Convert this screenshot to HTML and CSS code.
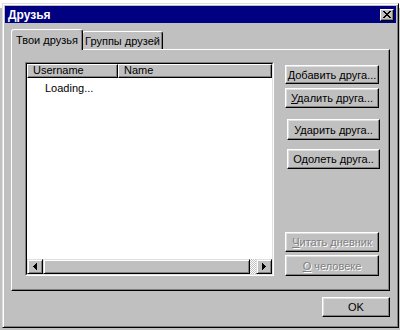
FILE: index.html
```html
<!DOCTYPE html>
<html lang="ru">
<head>
    <meta charset="UTF-8">
    <title>Друзья</title>
    <link rel="stylesheet" href="styles.css">
</head>
<body>
    <div class="backdrop"></div>

    <div class="window">
        <div class="titlebar">
            <span class="title">Друзья</span>
            <button class="close-btn" title="Close">
                <svg width="8" height="7" viewBox="0 0 8 7" shape-rendering="crispEdges">
                    <path d="M0 0h2v1H0zM6 0h2v1H6zM1 1h2v1H1zM5 1h2v1H5zM2 2h4v1H2zM3 3h2v1H3zM2 4h4v1H2zM1 5h2v1H1zM5 5h2v1H5zM0 6h2v1H0zM6 6h2v1H6z" fill="#000"/>
                </svg>
            </button>
        </div>

        <div class="window-body">
            <div class="tabs">
                <div class="tab active">Твои друзья</div>
                <div class="tab">Группы друзей</div>
            </div>

            <div class="panel">
                <div class="listview">
                    <div class="list-inner">
                        <div class="list-header">
                            <div class="col col-user">Username</div>
                            <div class="col col-name">Name</div>
                        </div>
                        <div class="list-body">
                            <div class="list-row">Loading...</div>
                        </div>
                        <div class="hscroll">
                            <div class="scroll-btn">
                                <svg width="4" height="7" viewBox="0 0 4 7" shape-rendering="crispEdges">
                                    <path d="M3 0h1v7H3zM2 1h1v5H2zM1 2h1v3H1zM0 3h1v1H0z" fill="#000"/>
                                </svg>
                            </div>
                            <div class="scroll-thumb"></div>
                            <div class="scroll-track"></div>
                            <div class="scroll-btn">
                                <svg width="4" height="7" viewBox="0 0 4 7" shape-rendering="crispEdges">
                                    <path d="M0 0h1v7H0zM1 1h1v5H1zM2 2h1v3H2zM3 3h1v1H3z" fill="#000"/>
                                </svg>
                            </div>
                        </div>
                    </div>
                </div>

                <div class="actions">
                    <button class="btn btn-add"><u>Д</u>обавить друга...</button>
                    <button class="btn btn-remove"><u>У</u>далить друга...</button>
                    <button class="btn btn-hit">Ударить друга..</button>
                    <button class="btn btn-beat">Одолеть друга..</button>
                    <button class="btn btn-diary" disabled><u>Ч</u>итать дневник</button>
                    <button class="btn btn-about" disabled><u>О</u> человеке</button>
                </div>
            </div>

            <div class="footer">
                <button class="btn btn-ok">OK</button>
            </div>
        </div>
    </div>
</body>
</html>
```

FILE: styles.css
```css
* {
    margin: 0;
    padding: 0;
    box-sizing: border-box;
}

body {
    width: 400px;
    height: 330px;
    overflow: hidden;
    background: #c0c0c0;
    font-family: 'Liberation Sans', Arial, sans-serif;
    font-size: 11px;
    color: #000;
}

/* what peeks out behind the dialog */
.backdrop {
    height: 8px;
    background: #fff;
}

/* dialog window */
.window {
    position: absolute;
    left: 2px;
    top: 3px;
    width: 397px;
    height: 325px;
    background: #c0c0c0;
    border: 1px solid;
    border-color: #dfdfdf #000 #000 #dfdfdf;
    box-shadow: inset 1px 1px #fff, inset -1px -1px #808080;
    padding: 2px;
    display: flex;
    flex-direction: column;
}

.titlebar {
    height: 17px;
    background: #000080;
    display: flex;
    align-items: center;
    justify-content: space-between;
    padding: 0 2px 0 3px;
}

.title {
    color: #fff;
    font-weight: bold;
    font-size: 12px;
}

.close-btn {
    width: 14px;
    height: 12px;
    background: #c0c0c0;
    border: 1px solid;
    border-color: #fff #000 #000 #fff;
    box-shadow: inset -1px -1px #808080;
    display: flex;
    align-items: center;
    justify-content: center;
}

.window-body {
    flex: 1;
    padding: 6px 6px 0 6px;
    display: flex;
    flex-direction: column;
}

/* tabs */
.tabs {
    display: flex;
    align-items: flex-end;
    height: 20px;
}

.tab {
    height: 18px;
    display: flex;
    align-items: center;
    justify-content: center;
    white-space: nowrap;
    background: #c0c0c0;
    border-top: 1px solid #fff;
    border-left: 1px solid #fff;
    border-right: 1px solid #000;
    box-shadow: inset -1px 0 #808080;
    border-radius: 3px 3px 0 0;
}

.tab.active {
    height: 21px;
    width: 72px;
    margin-bottom: -1px;
    position: relative;
    z-index: 1;
}

.tab:not(.active) {
    width: 81px;
    margin-left: -1px;
}

.panel {
    height: 242px;
    border: 1px solid;
    border-color: #fff #000 #000 #fff;
    box-shadow: inset -1px -1px #808080;
    padding: 12px 0 14px 13px;
    display: flex;
    gap: 11px;
}

/* list view */
.listview {
    width: 249px;
    border: 1px solid;
    border-color: #808080 #fff #fff #808080;
}

.list-inner {
    height: 100%;
    border: 1px solid;
    border-color: #000 #dfdfdf #dfdfdf #000;
    background: #fff;
    display: flex;
    flex-direction: column;
}

.list-header {
    display: flex;
    height: 14px;
}

.col {
    background: #c0c0c0;
    border: 1px solid;
    border-color: #fff #000 #000 #fff;
    box-shadow: inset -1px -1px #808080;
    padding-left: 5px;
    line-height: 11px;
}

.col-user { width: 91px; }
.col-name { flex: 1; }

.list-body {
    flex: 1;
}

.list-row {
    padding: 3px 0 0 18px;
    line-height: 14px;
}

.hscroll {
    height: 15px;
    display: flex;
}

.scroll-btn {
    width: 16px;
    background: #c0c0c0;
    border: 1px solid;
    border-color: #dfdfdf #000 #000 #dfdfdf;
    box-shadow: inset 1px 1px #fff, inset -1px -1px #808080;
    display: flex;
    align-items: center;
    justify-content: center;
}

.scroll-thumb {
    flex: 1;
    background: #c0c0c0;
    border: 1px solid;
    border-color: #dfdfdf #000 #000 #dfdfdf;
    box-shadow: inset 1px 1px #fff, inset -1px -1px #808080;
}

.scroll-track {
    width: 6px;
    background: repeating-conic-gradient(#c0c0c0 0 25%, #fff 0 50%);
    background-size: 2px 2px;
}

/* buttons */
.actions {
    width: 95px;
    padding-top: 3px;
    display: flex;
    flex-direction: column;
    align-items: flex-start;
}

.btn {
    font-family: 'Liberation Sans', Arial, sans-serif;
    font-size: 11px;
    color: #000;
    width: 94px;
    height: 19px;
    background: #c0c0c0;
    border: 1px solid;
    border-color: #fff #000 #000 #fff;
    box-shadow: inset -1px -1px #808080, inset 1px 1px #dfdfdf;
}

.btn u {
    text-decoration-thickness: 1px;
}

.btn-remove { margin-top: 4px; height: 20px; }
.btn-hit { margin-top: 11px; height: 21px; margin-left: 2px; width: 93px; }
.btn-beat { margin-top: 9px; height: 20px; margin-left: 2px; width: 93px; }
.btn-diary { margin-top: auto; height: 20px; }
.btn-about { margin-top: 3px; height: 21px; }

.btn:disabled {
    color: #808080;
    text-shadow: 1px 1px 0 #fff;
}

.footer {
    display: flex;
    justify-content: flex-end;
    margin-top: 6px;
}

.btn-ok {
    width: 68px;
    height: 20px;
}
```
